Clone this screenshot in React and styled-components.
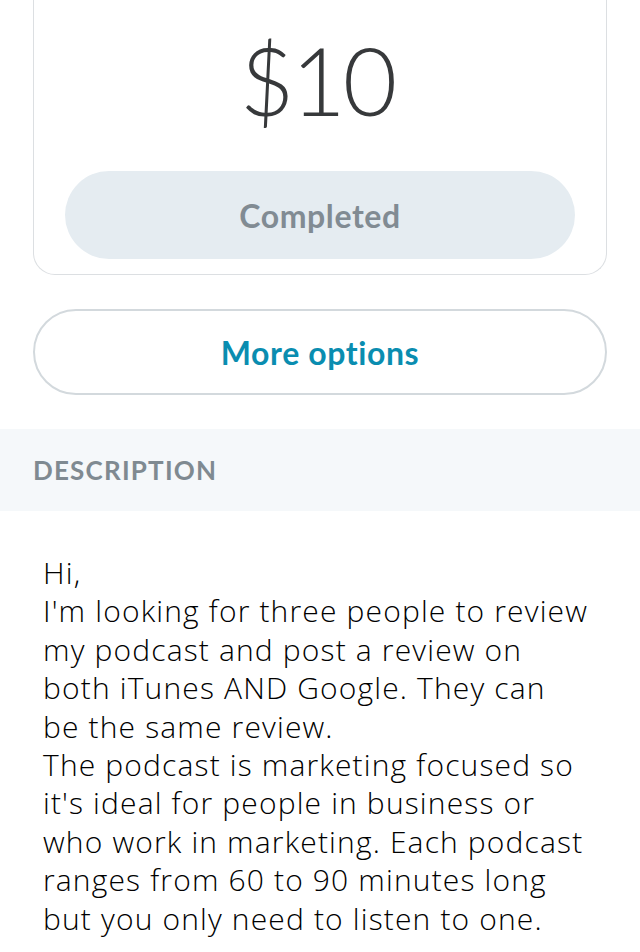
import React from "react";
import styled, { createGlobalStyle } from "styled-components";

const Global = createGlobalStyle`
  html, body { margin: 0; padding: 0; background: #ffffff; }
  body { font-family: Lato, "Open Sans", "Liberation Sans", sans-serif; -webkit-font-smoothing: antialiased; }
  * { box-sizing: border-box; }
`;

const Page = styled.div`
  width: 640px;
  display: flex;
  flex-direction: column;
`;

const Padded = styled.div`
  padding: 0 33px;
`;

const Card = styled.div`
  border: 1px solid #dcdfe2;
  border-top: none;
  border-radius: 0 0 22px 22px;
  padding: 22px 31px 15px;
  display: flex;
  flex-direction: column;
  align-items: center;
`;

const Price = styled.div`
  font-family: Lato, sans-serif;
  font-weight: 300;
  font-size: 94px;
  line-height: 116px;
  letter-spacing: -3px;
  color: #37393b;
  margin-bottom: 33px;
  margin-right: 6px;
`;

const PillButton = styled.button`
  width: 100%;
  height: ${(p) => p.$h}px;
  border-radius: 999px;
  border: ${(p) => (p.$outline ? "2px solid #d3d9dd" : "none")};
  background: ${(p) => (p.$outline ? "#ffffff" : "#e5ecf1")};
  color: ${(p) => (p.$outline ? "#0a8db0" : "#818b93")};
  font-family: Lato, "Open Sans", sans-serif;
  font-weight: 700;
  font-size: 32px;
  letter-spacing: 0.6px;
  display: flex;
  align-items: center;
  justify-content: center;
  padding: 0;
  cursor: pointer;
`;

const Spacer = styled.div`
  height: ${(p) => p.$h}px;
`;

const SectionBand = styled.div`
  background: #f5f8fa;
  height: 82px;
  padding: 0 33px;
  display: flex;
  align-items: center;
`;

const SectionTitle = styled.div`
  font-family: Lato, "Open Sans", sans-serif;
  font-weight: 700;
  font-size: 26px;
  letter-spacing: 1.2px;
  color: #7f8a91;
`;

const Body = styled.div`
  padding: 43px 10px 0 43px;
  font-family: "Open Sans", Lato, sans-serif;
  font-weight: 300;
  font-size: 30px;
  line-height: 38.4px;
  letter-spacing: 1.15px;
  color: #000000;
`;

const Line = styled.div`
  white-space: nowrap;
`;

const lines = [
  "Hi,",
  "I'm looking for three people to review",
  "my podcast and post a review on",
  "both iTunes AND Google. They can",
  "be the same review.",
  "The podcast is marketing focused so",
  "it's ideal for people in business or",
  "who work in marketing. Each podcast",
  "ranges from 60 to 90 minutes long",
  "but you only need to listen to one.",
];

export default function App() {
  return (
    <>
      <Global />
      <Page>
        <Padded>
          <Card>
            <Price>$10</Price>
            <PillButton $h={88}>Completed</PillButton>
          </Card>
        </Padded>
        <Spacer $h={34} />
        <Padded>
          <PillButton $outline $h={86}>More options</PillButton>
        </Padded>
        <Spacer $h={34} />
        <SectionBand>
          <SectionTitle>DESCRIPTION</SectionTitle>
        </SectionBand>
        <Body>
          {lines.map((l, i) => (
            <Line key={i}>{l}</Line>
          ))}
        </Body>
      </Page>
    </>
  );
}
